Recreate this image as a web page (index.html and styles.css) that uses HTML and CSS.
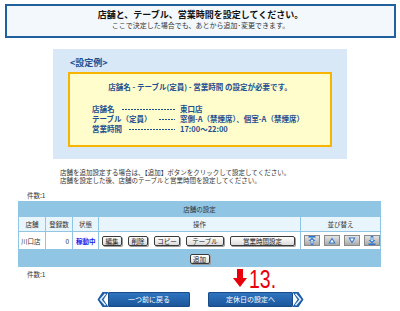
FILE: index.html
```html
<!DOCTYPE html>
<html lang="ja">
  <head>
    <meta charset="utf-8">
    <title>店舗の設定</title>
    <link rel="stylesheet" href="styles.css">
  </head>
  <body>
    <div class="guide">
      <h1>店舗と、テーブル、営業時間を設定してください。</h1>
      <p>ここで決定した場合でも、あとから追加･変更できます。</p>
    </div>

    <div class="example">
      <h2>&lt;設定例&gt;</h2>
      <div class="example-box">
        <p class="example-lead">店舗名 - テーブル(定員) - 営業時間 の設定が必要です。</p>
        <div class="def-row">
          <span class="def-key">店舗名<span class="def-dash"></span></span>
          <span class="def-val">東口店</span>
        </div>
        <div class="def-row">
          <span class="def-key">テーブル（定員）<span class="def-dash"></span></span>
          <span class="def-val">窓側-A（禁煙席）、個室-A（禁煙席）</span>
        </div>
        <div class="def-row">
          <span class="def-key">営業時間<span class="def-dash"></span></span>
          <span class="def-val">17:00～22:00</span>
        </div>
      </div>
    </div>

    <div class="notes">
      <p>店舗を追加設定する場合は、【追加】ボタンをクリックして設定してください。</p>
      <p>店舗を設定した後、店舗のテーブルと営業時間を設定してください。</p>
    </div>

    <p class="count">件数:1</p>
    <table class="shop-table">
      <colgroup>
        <col style="width:26px">
        <col style="width:26px">
        <col style="width:25px">
        <col style="width:201px">
        <col style="width:79px">
      </colgroup>
      <tr class="title-row"><th colspan="5">店舗の設定</th></tr>
      <tr class="head-row">
        <th>店舗</th>
        <th>登録数</th>
        <th>状態</th>
        <th>操作</th>
        <th>並び替え</th>
      </tr>
      <tr class="data-row">
        <td>川口店</td>
        <td class="num">0</td>
        <td><a href="#" class="status">稼動中</a></td>
        <td>
          <div class="ops">
            <button class="btn btn-s">編集</button>
            <button class="btn btn-s">削除</button>
            <button class="btn btn-m">コピー</button>
            <button class="btn btn-l">テーブル</button>
            <button class="btn btn-xl">営業時間設定</button>
          </div>
        </td>
        <td>
          <div class="sort">
            <button class="sort-btn" title="先頭へ">
              <svg width="8" height="9" viewBox="0 0 8 9"><rect x="0.5" y="0" width="7" height="1.6" fill="#2f78d0"/><path d="M4 1.8 L7.5 5 L5.3 5 L5.3 9 L2.7 9 L2.7 5 L0.5 5 Z" fill="#2f78d0"/><path d="M4 3.4 L5.6 4.8 L4.5 4.8 L4.5 7.8 L3.5 7.8 L3.5 4.8 L2.4 4.8 Z" fill="#fff"/></svg>
            </button>
            <button class="sort-btn" title="上へ">
              <svg width="8" height="7" viewBox="0 0 8 7"><path d="M4 0.5 L7.6 6.5 L0.4 6.5 Z" fill="#2f78d0"/><path d="M4 2.6 L5.8 5.5 L2.2 5.5 Z" fill="#fff"/></svg>
            </button>
            <button class="sort-btn" title="下へ">
              <svg width="8" height="7" viewBox="0 0 8 7"><path d="M4 6.5 L7.6 0.5 L0.4 0.5 Z" fill="#2f78d0"/><path d="M4 4.4 L5.8 1.5 L2.2 1.5 Z" fill="#fff"/></svg>
            </button>
            <button class="sort-btn" title="最後へ">
              <svg width="8" height="9" viewBox="0 0 8 9"><rect x="0.5" y="7.4" width="7" height="1.6" fill="#2f78d0"/><path d="M4 7.2 L7.5 4 L5.3 4 L5.3 0 L2.7 0 L2.7 4 L0.5 4 Z" fill="#2f78d0"/><path d="M4 5.6 L5.6 4.2 L4.5 4.2 L4.5 1.2 L3.5 1.2 L3.5 4.2 L2.4 4.2 Z" fill="#fff"/></svg>
            </button>
          </div>
        </td>
      </tr>
      <tr class="foot-row">
        <td colspan="5"><button class="btn btn-s">追加</button></td>
      </tr>
    </table>
    <p class="count count-bottom">件数:1</p>

    <div class="nav">
      <a href="#" class="nav-btn">
        <svg class="chev" width="12" height="15" viewBox="0 0 12 15"><path d="M11.5 0 L5.5 0 L0.5 7.5 L5.5 15 L11.5 15 L6.5 7.5 Z" fill="#1d5ea8"/><path d="M8.5 1.8 L3.6 7.5 L8.5 13.2" fill="none" stroke="#e6f1fb" stroke-width="1.6"/></svg>
        <span class="nav-body">一つ前に戻る</span>
      </a>
      <a href="#" class="nav-btn nav-next">
        <span class="step-mark">
          <svg width="14" height="18" viewBox="0 0 14 18"><path d="M4 0 L10 0 L10 9 L14 9 L7 18 L0 9 L4 9 Z" fill="#e8000b"/></svg>
          <span class="step-num">13.</span>
        </span>
        <span class="nav-body">定休日の設定へ</span>
        <svg class="chev" width="12" height="15" viewBox="0 0 12 15"><path d="M0.5 0 L6.5 0 L11.5 7.5 L6.5 15 L0.5 15 L5.5 7.5 Z" fill="#1d5ea8"/><path d="M3.5 1.8 L8.4 7.5 L3.5 13.2" fill="none" stroke="#e6f1fb" stroke-width="1.6"/></svg>
      </a>
    </div>
  </body>
</html>
```

FILE: styles.css
```css
body {
  margin: 0;
  padding: 0;
  background-color: #ffffff;
  font-family: "Noto Sans CJK JP", "Noto Sans", sans-serif;
  color: #333333;
}

p {
  margin: 0;
}

/* top guide box */
.guide {
  margin: 4px 4px 0 5px;
  height: 27px;
  padding-top: 3px;
  border: 2px solid #20609c;
  background-color: #f3f8fd;
  text-align: center;
}

.guide h1 {
  margin: 0;
  font-size: 9px;
  line-height: 12px;
  font-weight: bold;
  color: #111111;
}

.guide p {
  font-size: 7px;
  line-height: 9px;
  color: #333333;
}

/* example panel */
.example {
  box-sizing: border-box;
  width: 294px;
  height: 110px;
  margin: 11px auto 0;
  padding: 7px 15px 0;
  background-color: #d9e8f6;
}

.example h2 {
  margin: 0 0 2px 2px;
  font-size: 9px;
  line-height: 14px;
  font-weight: bold;
  color: #1d4f91;
}

.example-box {
  box-sizing: border-box;
  height: 75px;
  padding: 7px 0 0 22px;
  border: 2px solid #f7b500;
  background-color: #fffdcc;
  color: #1d4f91;
  font-size: 7.5px;
  font-weight: bold;
}

.example-lead {
  margin: 0 0 11px -22px;
  line-height: 12px;
  text-align: center;
}

.def-row {
  display: flex;
  line-height: 10px;
}

.def-key {
  display: flex;
  align-items: center;
  width: 86px;
  white-space: nowrap;
}

.def-dash {
  flex: 1;
  height: 1px;
  margin: 1px 3px 0 7px;
  background: repeating-linear-gradient(to right, #1d4f91 0 2px, transparent 2px 3px);
}

.def-val {
  margin-left: 2px;
}

/* notes */
.notes {
  margin: 9px 0 0 60px;
  font-size: 6.5px;
  line-height: 8px;
  color: #333333;
}

.count {
  margin-top: 6px;
  padding-left: 27px;
  font-size: 6.5px;
  line-height: 10px;
  color: #333333;
}

.count-bottom {
  margin-top: 2px;
}

/* shop table */
.shop-table {
  table-layout: fixed;
  width: 363px;
  margin: 1px 0 0 18px;
  border-spacing: 1px;
  background-color: #90c5e3;
  font-size: 6.5px;
  color: #333333;
}

.shop-table th,
.shop-table td {
  padding: 0;
  font-weight: normal;
}

.title-row th {
  height: 14px;
  text-align: center;
}

.head-row th {
  height: 14px;
  background-color: #e9f5fc;
  text-align: center;
}

.data-row td {
  height: 17px;
  background-color: #ffffff;
  padding-left: 2px;
}

.data-row td.num {
  text-align: right;
  padding: 0 3px 0 0;
}

.status {
  color: #1a1aee;
  text-decoration: none;
  font-weight: bold;
  margin-left: 1px;
}

.foot-row td {
  height: 15px;
  text-align: center;
  padding-top: 1px;
}

.ops {
  display: flex;
  gap: 6px;
  padding-left: 1px;
}

.btn {
  box-sizing: border-box;
  height: 10px;
  padding: 0;
  border: 1px solid #3a3a3a;
  border-radius: 2px;
  background: linear-gradient(#ffffff, #dcdcdc);
  box-shadow: 1px 1px 0 #9a9a9a;
  font-family: "Noto Sans CJK JP", sans-serif;
  font-size: 6.5px;
  line-height: 8px;
  color: #222222;
  text-align: center;
}

.btn-s { width: 20px; }
.btn-m { width: 26px; }
.btn-l { width: 38px; }
.btn-xl { width: 65px; }

.sort {
  display: flex;
  gap: 4px;
  padding-left: 1px;
}

.sort-btn {
  display: flex;
  align-items: center;
  justify-content: center;
  box-sizing: border-box;
  width: 16px;
  height: 11px;
  padding: 0;
  border: 1px solid #8a8a8a;
  background: linear-gradient(#e4e4e4, #a9a9a9);
}

.sort-btn svg {
  display: block;
}

/* bottom navigation */
.nav {
  display: flex;
  justify-content: center;
  gap: 18px;
  margin-top: 13px;
  padding-left: 1px;
}

.nav-btn {
  position: relative;
  display: flex;
  height: 15px;
  text-decoration: none;
}

.chev {
  display: block;
  flex: none;
}

.nav-body {
  display: block;
  height: 15px;
  border-radius: 2px;
  background: linear-gradient(#2f76c2, #1b5599);
  box-shadow: inset 0 0 0 1px #174a86;
  color: #ffffff;
  font-size: 7px;
  line-height: 15px;
  text-align: center;
}

.nav-btn .nav-body {
  width: 82px;
  margin-left: -1px;
}

.nav-next .nav-body {
  width: 85px;
  margin: 0 -1px 0 0;
}

/* step marker drawn over the page */
.step-mark {
  position: absolute;
  left: 25px;
  bottom: 18px;
  display: flex;
  align-items: flex-end;
  gap: 2px;
}

.step-mark svg {
  display: block;
  margin-bottom: 2px;
}

.step-num {
  display: inline-block;
  font-family: "Liberation Sans", Arial, sans-serif;
  font-size: 25px;
  line-height: 20px;
  color: #e8000b;
  transform: scaleX(0.78);
  transform-origin: left bottom;
}
```
